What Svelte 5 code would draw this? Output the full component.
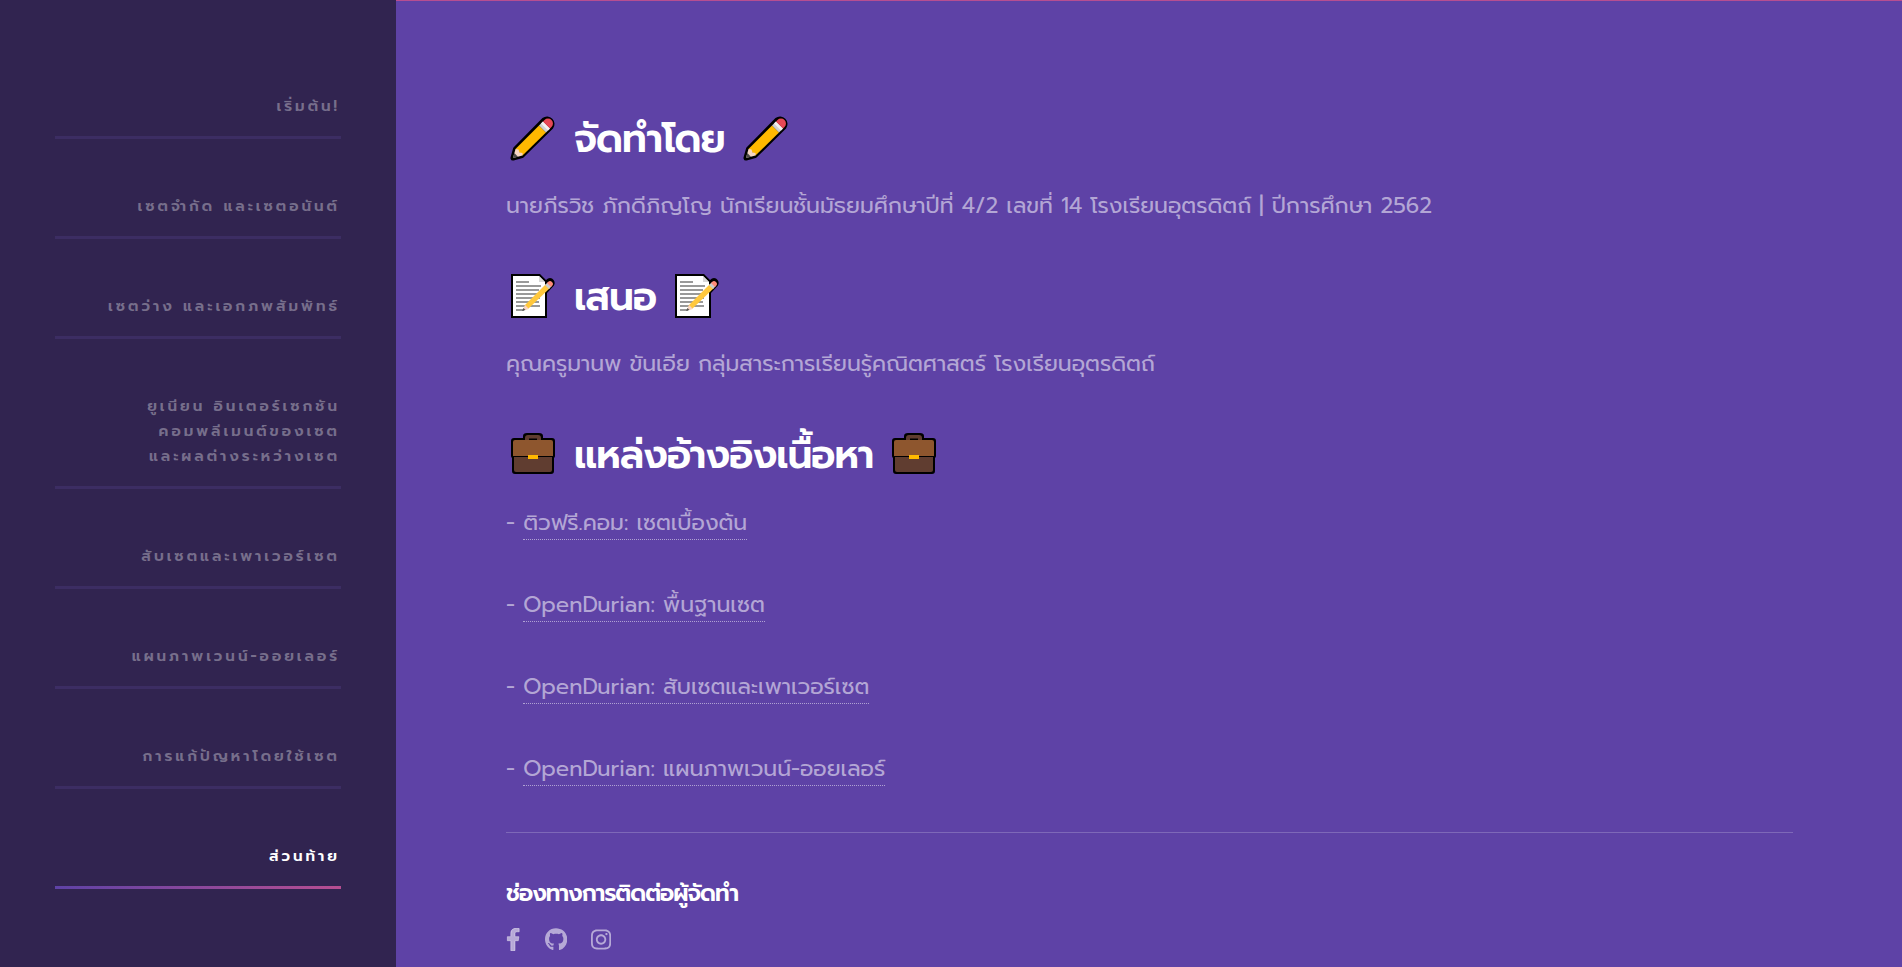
<script>
  const nav = [
    ['เริ่มต้น!'],
    ['เซตจำกัด และเซตอนันต์'],
    ['เซตว่าง และเอกภพสัมพัทธ์'],
    ['ยูเนียน อินเตอร์เซกชัน', 'คอมพลีเมนต์ของเซต', 'และผลต่างระหว่างเซต'],
    ['สับเซตและเพาเวอร์เซต'],
    ['แผนภาพเวนน์-ออยเลอร์'],
    ['การแก้ปัญหาโดยใช้เซต'],
    ['ส่วนท้าย']
  ];
  let active = $state(7);

  const sources = [
    'ติวฟรี.คอม: เซตเบื้องต้น',
    'OpenDurian: พื้นฐานเซต',
    'OpenDurian: สับเซตและเพาเวอร์เซต',
    'OpenDurian: แผนภาพเวนน์-ออยเลอร์'
  ];
</script>

{#snippet pencil()}
  <svg class="emoji" viewBox="0 0 44 44" aria-hidden="true">
    <path d="M2 42 4.500 33 33 4a5 5 0 0 1 7 7L11 39.500Z" fill="#000" stroke="#000" stroke-width="5" stroke-linejoin="round" />
    <path d="M4.500 33 28 9.500l7 7L11.500 39.500Z" fill="#ffb900" />
    <path d="m28 9.500 4-4 7 7-4 4Z" fill="#d2d2d2" />
    <path d="m30 7.500 2-2 7 7-2 2Z" fill="#f2f2f2" />
    <path d="m32 5.500 1.500-1.500a4.500 4.500 0 0 1 7 7L39 12.500Z" fill="#e74856" />
    <path d="M2 42 4.500 33l3 .5 1 3 3 .5v2.500Z" fill="#f7d7c4" />
    <path d="m2 42 1.300-5 3.700 3.700Z" fill="#4c4a48" />
  </svg>
{/snippet}

{#snippet memo()}
  <svg class="emoji" viewBox="0 0 44 44" aria-hidden="true">
    <path d="M0 0h29l6 6q3-3 6-1.500 4 3 2 7L36 19v25H0Z" fill="#000" />
    <path d="M2 2h26l6 6v34H2Z" fill="#fff" />
    <path d="M28 2v6h6Z" fill="#d8d8d8" />
    <path d="M5 8h13M5 12h25M5 16h23M5 20h21M5 24h24M5 28h23M5 32h24M5 36h8" stroke="#999" stroke-width="2" />
    <path d="m12 36 2-5L35 10l4 4-22 21Z" fill="#ffc83d" />
    <path d="m34 11 2.500-2.500 4 4-2.500 2.500Z" fill="#ccc" />
    <path d="m36 9 1-1q2-2 4 0t0 4l-1 1Z" fill="#ff8b78" />
    <path d="m12 36 2-5 4 4Z" fill="#fad5c7" />
    <path d="m11 37 1.500-3 2 2Z" fill="#555" />
  </svg>
{/snippet}

{#snippet briefcase()}
  <svg class="emoji" viewBox="0 0 44 44" aria-hidden="true">
    <path d="M3 6h9V4q0-3 4-3h12q4 0 4 3v2h9q3 0 3 3v15q0 1-1 2v13q0 3-3 3H4q-3 0-3-3V26q-1-1-1-2V9q0-3 3-3Z" fill="#000" />
    <path d="M14 9V6q0-3 3-3h10q3 0 3 3v3h-4V6.500h-8V9Z" fill="#603d30" />
    <path d="M3 25h38v13q0 2-2 2H5q-2 0-2-2Z" fill="#603d30" />
    <path d="M4 8h36q2 0 2 2v14H2V10q0-2 2-2Z" fill="#8e562e" />
    <path d="M17 23h10v4H17Z" fill="#ffb900" />
  </svg>
{/snippet}

<div class="page">
  <aside>
    <nav>
      {#each nav as lines, i}
        <a href="#section-{i}" class:active={active === i} onclick={() => (active = i)}>
          {#each lines as line}<span>{line}</span>{/each}
        </a>
      {/each}
    </nav>
  </aside>

  <main>
    <section>
      <h2>{@render pencil()}<span>จัดทำโดย</span>{@render pencil()}</h2>
      <p>นายภีรวิช ภักดีภิญโญ นักเรียนชั้นมัธยมศึกษาปีที่ 4/2 เลขที่ 14 โรงเรียนอุตรดิตถ์ | ปีการศึกษา 2562</p>
    </section>
    <section>
      <h2>{@render memo()}<span>เสนอ</span>{@render memo()}</h2>
      <p>คุณครูมานพ ขันเอีย กลุ่มสาระการเรียนรู้คณิตศาสตร์ โรงเรียนอุตรดิตถ์</p>
    </section>
    <section>
      <h2>{@render briefcase()}<span>แหล่งอ้างอิงเนื้อหา</span>{@render briefcase()}</h2>
      <div class="sources">
        {#each sources as source}
          <p>- <a href="#source">{source}</a></p>
        {/each}
      </div>
    </section>
    <footer>
      <h3>ช่องทางการติดต่อผู้จัดทำ</h3>
      <div class="social">
        <a href="#facebook" aria-label="Facebook">
          <svg viewBox="-30 0 324 512"><path stroke="currentColor" stroke-width="16" d="M76.700 504V283H0v-91h76.700v-71.700C76.700 42.400 124.300 8 193.800 8c33.300 0 61.900 2.500 70.200 3.600V85h-48.200c-37.800 0-45.100 18-45.100 44.300V192H256l-11.700 91h-73.600v221Z" /></svg>
        </a>
        <a href="#github" aria-label="GitHub">
          <svg viewBox="0 0 496 512"><path d="M165.900 397.400c0 2-2.300 3.600-5.200 3.600-3.300.3-5.600-1.300-5.600-3.600 0-2 2.300-3.600 5.200-3.600 3-.3 5.600 1.300 5.600 3.600zm-31.100-4.500c-.7 2 1.300 4.300 4.300 4.900 2.600 1 5.600 0 6.200-2s-1.300-4.300-4.300-5.200c-2.600-.7-5.500.3-6.200 2.300zm44.200-1.700c-2.900.7-4.900 2.600-4.600 4.900.3 2 2.900 3.300 5.900 2.600 2.900-.7 4.900-2.600 4.600-4.600-.3-1.900-3-3.200-5.900-2.900zM244.800 8C106.100 8 0 113.300 0 252c0 110.900 69.800 205.800 169.500 239.200 12.800 2.300 17.300-5.600 17.300-12.100 0-6.200-.3-40.400-.3-61.400 0 0-70 15-84.700-29.800 0 0-11.400-29.100-27.800-36.600 0 0-22.900-15.700 1.600-15.400 0 0 24.900 2 38.600 25.800 21.900 38.600 58.600 27.500 72.900 20.900 2.300-16 8.800-27.100 16-33.700-55.900-6.200-112.300-14.300-112.300-110.500 0-27.500 7.600-41.300 23.600-58.900-2.600-6.500-11.100-33.300 2.600-67.900 20.900-6.500 69 27 69 27 20-5.600 41.500-8.500 62.800-8.500s42.800 2.900 62.800 8.500c0 0 48.100-33.600 69-27 13.700 34.700 5.200 61.400 2.600 67.900 16 17.700 25.800 31.500 25.800 58.900 0 96.500-58.900 104.200-114.800 110.500 9.200 7.900 17 22.900 17 46.400 0 33.700-.3 75.400-.3 83.600 0 6.500 4.600 14.400 17.300 12.100C428.200 457.800 496 362.900 496 252 496 113.300 383.500 8 244.800 8z" /></svg>
        </a>
        <a href="#instagram" aria-label="Instagram">
          <svg viewBox="0 0 448 512"><path d="M224.100 141c-63.600 0-114.900 51.300-114.900 114.900s51.300 114.900 114.900 114.900S339 319.500 339 255.900 287.700 141 224.100 141zm0 189.600c-41.100 0-74.700-33.500-74.700-74.700s33.500-74.700 74.700-74.700 74.700 33.500 74.700 74.700-33.600 74.700-74.700 74.700zm146.400-194.300c0 14.900-12 26.800-26.800 26.800-14.900 0-26.800-12-26.800-26.800s12-26.800 26.800-26.800 26.800 12 26.800 26.800zm76.100 27.200c-1.700-35.900-9.900-67.700-36.200-93.900-26.200-26.200-58-34.400-93.900-36.200-37-2.100-147.900-2.100-184.900 0-35.800 1.700-67.600 9.900-93.900 36.100s-34.400 58-36.200 93.900c-2.100 37-2.100 147.900 0 184.900 1.700 35.900 9.900 67.700 36.200 93.900s58 34.400 93.900 36.200c37 2.100 147.900 2.100 184.900 0 35.900-1.700 67.700-9.900 93.900-36.200 26.200-26.200 34.400-58 36.200-93.900 2.100-37 2.100-147.800 0-184.800zM398.800 388c-7.800 19.600-22.900 34.700-42.600 42.600-29.500 11.700-99.500 9-132.100 9s-102.700 2.600-132.100-9c-19.600-7.800-34.700-22.900-42.600-42.600-11.700-29.500-9-99.500-9-132.100s-2.600-102.700 9-132.100c7.800-19.600 22.900-34.700 42.600-42.600 29.500-11.700 99.500-9 132.100-9s102.700-2.600 132.100 9c19.600 7.800 34.700 22.900 42.600 42.600 11.700 29.500 9 99.500 9 132.100s2.700 102.700-9 132.100z" /></svg>
        </a>
      </div>
    </footer>
  </main>
</div>

<style>
  :global(body) {
    background: #5e42a6;
  }
  .page {
    display: flex;
    min-height: 100vh;
    font-family: Prompt, Kanit, 'Noto Sans Thai', 'Noto Sans', sans-serif;
    color: rgba(255, 255, 255, 0.55);
  }
  aside {
    flex: 0 0 396px;
    box-sizing: border-box;
    padding: 16px 55px 0;
    background: #312450;
    display: flex;
    flex-direction: column;
    justify-content: center;
  }
  nav {
    display: flex;
    flex-direction: column;
    gap: 55px;
  }
  nav a {
    display: flex;
    flex-direction: column;
    padding: 0 1px 17px 0;
    border-bottom: 3px solid #3c2d63;
    color: rgba(255, 255, 255, 0.35);
    font-size: 15px;
    font-weight: 600;
    line-height: 25px;
    letter-spacing: 3px;
    text-align: right;
    text-decoration: none;
  }
  nav a.active {
    color: #fff;
    border-image: linear-gradient(to right, #5e42a6, #b74e91) 1;
  }
  main {
    flex: 1;
    min-width: 0;
    border-top: 1px solid #b74e91;
    padding: 108px 109px 0 110px;
  }
  section {
    margin-bottom: 40px;
  }
  section:last-of-type {
    margin-bottom: 42px;
  }
  h2 {
    display: flex;
    align-items: center;
    gap: 19px;
    margin: 0 0 16px;
    padding-left: 5px;
    color: #fff;
    font-size: 39px;
    font-weight: 600;
    line-height: 60px;
    letter-spacing: -1px;
  }
  .emoji {
    width: 44px;
    height: 44px;
    flex: none;
    margin-bottom: 2px;
    overflow: visible;
  }
  p {
    margin: 0;
    font-size: 22px;
    line-height: 42px;
  }
  .sources {
    display: grid;
    gap: 40px;
    padding-top: 1px;
  }
  p a {
    color: inherit;
    text-decoration: none;
    border-bottom: 1px dotted rgba(255, 255, 255, 0.5);
  }
  footer {
    border-top: 1px solid #7e68b8;
    padding-top: 40px;
  }
  h3 {
    margin: 0 0 13px;
    color: #fff;
    font-size: 23px;
    font-weight: 600;
    line-height: 42px;
    letter-spacing: -1px;
  }
  .social {
    display: flex;
    gap: 24px;
  }
  .social a {
    display: flex;
    color: inherit;
  }
  .social svg {
    height: 23px;
    fill: currentColor;
  }
</style>
